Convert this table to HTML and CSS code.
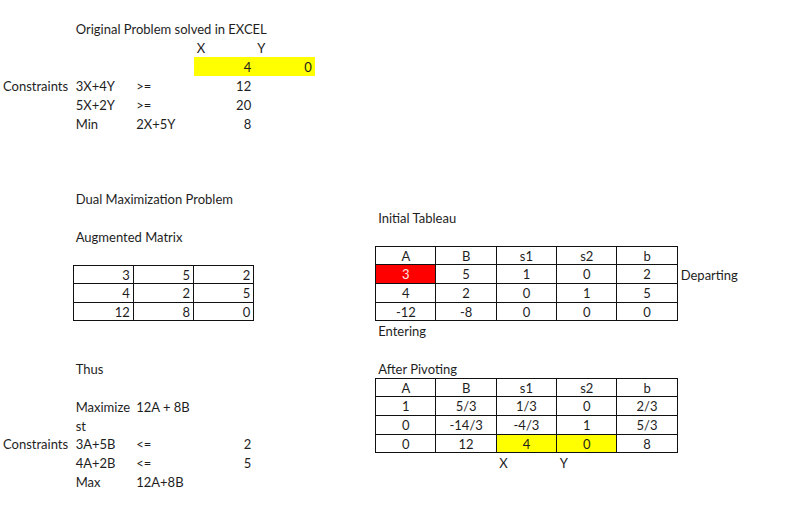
FILE: index.html
```html
<!DOCTYPE html>
<html>
<head>
<meta charset="utf-8">
<link rel="stylesheet" href="styles.css">
</head>
<body>
<div class="sheet">
  <div class="c t r1 cB span4">Original Problem solved in EXCEL</div>
  <div class="c r2 cD">X</div>
  <div class="c r2 cE">Y</div>
  <div class="c num yellow r3 cD">4</div>
  <div class="c num yellow r3 cE">0</div>

  <div class="c r4 cA">Constraints</div>
  <div class="c r4 cB">3X+4Y</div>
  <div class="c r4 cC">&gt;=</div>
  <div class="c num r4 cD">12</div>
  <div class="c r5 cB">5X+2Y</div>
  <div class="c r5 cC">&gt;=</div>
  <div class="c num r5 cD">20</div>
  <div class="c r6 cB">Min</div>
  <div class="c r6 cC">2X+5Y</div>
  <div class="c num r6 cD">8</div>

  <div class="c r10 cB span4">Dual Maximization Problem</div>
  <div class="c r11 cG span2">Initial Tableau</div>
  <div class="c r12 cB span3">Augmented Matrix</div>

  <div class="box matrix">
    <div class="bc num">3</div><div class="bc num">5</div><div class="bc num">2</div>
    <div class="bc num">4</div><div class="bc num">2</div><div class="bc num">5</div>
    <div class="bc num">12</div><div class="bc num">8</div><div class="bc num">0</div>
  </div>

  <div class="box tab tab1">
    <div class="bc ctr">A</div><div class="bc ctr">B</div><div class="bc ctr">s1</div><div class="bc ctr">s2</div><div class="bc ctr">b</div>
    <div class="bc ctr red">3</div><div class="bc ctr">5</div><div class="bc ctr">1</div><div class="bc ctr">0</div><div class="bc ctr">2</div>
    <div class="bc ctr">4</div><div class="bc ctr">2</div><div class="bc ctr">0</div><div class="bc ctr">1</div><div class="bc ctr">5</div>
    <div class="bc ctr">-12</div><div class="bc ctr">-8</div><div class="bc ctr">0</div><div class="bc ctr">0</div><div class="bc ctr">0</div>
  </div>
  <div class="c r14 cL span2">Departing</div>
  <div class="c r17 cG">Entering</div>

  <div class="c r19 cB">Thus</div>
  <div class="c r19 cG span2">After Pivoting</div>

  <div class="box tab tab2">
    <div class="bc ctr">A</div><div class="bc ctr">B</div><div class="bc ctr">s1</div><div class="bc ctr">s2</div><div class="bc ctr">b</div>
    <div class="bc ctr">1</div><div class="bc ctr">5/3</div><div class="bc ctr">1/3</div><div class="bc ctr">0</div><div class="bc ctr">2/3</div>
    <div class="bc ctr">0</div><div class="bc ctr">-14/3</div><div class="bc ctr">-4/3</div><div class="bc ctr">1</div><div class="bc ctr">5/3</div>
    <div class="bc ctr">0</div><div class="bc ctr">12</div><div class="bc ctr yellow">4</div><div class="bc ctr yellow">0</div><div class="bc ctr">8</div>
  </div>

  <div class="c r21 cB">Maximize</div>
  <div class="c r21 cC span2">12A + 8B</div>
  <div class="c r22 cB">st</div>
  <div class="c r23 cA">Constraints</div>
  <div class="c r23 cB">3A+5B</div>
  <div class="c r23 cC">&lt;=</div>
  <div class="c num r23 cD">2</div>
  <div class="c r24 cB">4A+2B</div>
  <div class="c r24 cC">&lt;=</div>
  <div class="c num r24 cD">5</div>
  <div class="c r24 cI">X</div>
  <div class="c r24 cJ">Y</div>
  <div class="c r25 cB">Max</div>
  <div class="c r25 cC span2">12A+8B</div>
</div>
</body>
</html>
```
FILE: styles.css
```css
html, body {
  margin: 0;
  padding: 0;
  background: #ffffff;
}
body {
  font-family: Lato, "Open Sans", sans-serif;
  font-size: 13px;
  color: #1e1e1e;
}
.sheet {
  display: grid;
  grid-template-columns: 72.7px repeat(12, 60.5px);
  grid-auto-rows: 18.89px;
  padding-top: 19.2px;
}
.c {
  line-height: 18.89px;
  padding: 1px 3px 0 3px;
  white-space: nowrap;
  box-sizing: border-box;
  height: 18.89px;
}
.num { text-align: right; padding-right: 3px; }
.yellow { background: #ffff00; }
.red { background: #ff0000; color: #ffe4e4; }

.span2 { grid-column-end: span 2; }
.span3 { grid-column-end: span 3; }
.span4 { grid-column-end: span 4; }

.cA { grid-column-start: 1; }
.cB { grid-column-start: 2; }
.cC { grid-column-start: 3; }
.cD { grid-column-start: 4; }
.cE { grid-column-start: 5; }
.cG { grid-column-start: 7; }
.cI { grid-column-start: 9; }
.cJ { grid-column-start: 10; }
.cL { grid-column-start: 12; }

.r1 { grid-row: 1; }
.r2 { grid-row: 2; }
.r3 { grid-row: 3; }
.r4 { grid-row: 4; }
.r5 { grid-row: 5; }
.r6 { grid-row: 6; }
.r10 { grid-row: 10; }
.r11 { grid-row: 11; }
.r12 { grid-row: 12; }
.r14 { grid-row: 14; }
.r17 { grid-row: 17; }
.r19 { grid-row: 19; }
.r21 { grid-row: 21; }
.r22 { grid-row: 22; }
.r23 { grid-row: 23; }
.r24 { grid-row: 24; }
.r25 { grid-row: 25; }

.box {
  display: grid;
  border-top: 1px solid #111;
  border-left: 1px solid #111;
  box-sizing: border-box;
}
.matrix {
  grid-column: 2 / span 3;
  grid-row: 14 / span 3;
  grid-template-columns: repeat(3, 1fr);
  grid-template-rows: repeat(3, 1fr);
}
.tab {
  grid-column: 7 / span 5;
  grid-template-columns: repeat(5, 1fr);
  grid-template-rows: repeat(4, 1fr);
}
.tab1 { grid-row: 13 / span 4; }
.tab2 { grid-row: 20 / span 4; }
.bc {
  border-right: 1px solid #111;
  border-bottom: 1px solid #111;
  line-height: 17px;
  padding: 1px 3px 0 3px;
  white-space: nowrap;
  overflow: hidden;
}
.ctr { text-align: center; }
```
